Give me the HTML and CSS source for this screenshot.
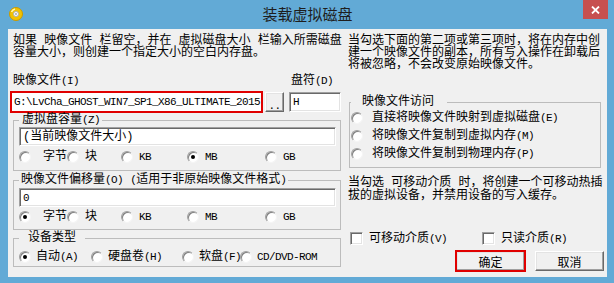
FILE: index.html
```html
<!DOCTYPE html>
<html lang="zh-CN">
<head>
    <meta charset="UTF-8">
    <title>装载虚拟磁盘</title>
    <link rel="stylesheet" href="styles.css">
</head>
<body>
    <div class="window">
        <div class="titlebar">
            <svg class="app-icon" width="14" height="14" viewBox="0 0 14 14">
                <circle cx="7" cy="7" r="6.5" fill="#f2c200" stroke="#c99a00"/>
                <path d="M2.5 5 A5 5 0 0 1 6 2" stroke="#fff6b0" stroke-width="1.5" fill="none"/>
                <circle cx="7" cy="7" r="2.5" fill="#ffffff" stroke="#b0b0b0"/>
                <circle cx="7" cy="7" r="0.9" fill="#9a9a9a"/>
            </svg>
            <div class="title">装载虚拟磁盘</div>
            <div class="close">
                <svg width="9" height="8" viewBox="0 0 9 8">
                    <path d="M1 0.5 L8 7.5 M8 0.5 L1 7.5" stroke="#fff" stroke-width="1.8"/>
                </svg>
            </div>
        </div>

        <div class="client">
            <div class="col-left">
                <p class="note">如果 映像文件 栏留空，并在 虚拟磁盘大小 栏输入所需磁盘<br>容量大小，则创建一个指定大小的空白内存盘。</p>

                <div class="label-row">
                    <div class="file-label">映像文件<span class="en">(I)</span></div>
                    <div class="drive-label">盘符<span class="en">(D)</span></div>
                </div>
                <div class="input-row">
                    <div class="path-box">
                        <div class="field path"><span class="en">G:\LvCha_GHOST_WIN7_SP1_X86_ULTIMATE_2015</span><span class="caret"></span></div>
                    </div>
                    <button class="btn browse"><span class="en">..</span></button>
                    <div class="field drive"><span class="en">H</span></div>
                </div>

                <fieldset class="group size-group">
                    <legend>虚拟盘容量<span class="en">(Z)</span></legend>
                    <div class="field">(当前映像文件大小)</div>
                    <div class="units">
                        <label class="opt wide"><span class="radio"></span><span>字节</span></label>
                        <label class="opt"><span class="radio"></span><span>块</span></label>
                        <label class="opt"><span class="radio"></span><span class="en">KB</span></label>
                        <label class="opt"><span class="radio on"></span><span class="en">MB</span></label>
                        <label class="opt"><span class="radio"></span><span class="en">GB</span></label>
                    </div>
                </fieldset>

                <fieldset class="group offset-group">
                    <legend>映像文件偏移量<span class="en">(O)</span> <span class="en">(</span>适用于非原始映像文件格式<span class="en">)</span></legend>
                    <div class="field"><span class="en">0</span></div>
                    <div class="units">
                        <label class="opt wide"><span class="radio on"></span><span>字节</span></label>
                        <label class="opt"><span class="radio"></span><span>块</span></label>
                        <label class="opt"><span class="radio"></span><span class="en">KB</span></label>
                        <label class="opt"><span class="radio"></span><span class="en">MB</span></label>
                        <label class="opt"><span class="radio"></span><span class="en">GB</span></label>
                    </div>
                </fieldset>

                <fieldset class="group device-group">
                    <legend>设备类型</legend>
                    <div class="devices">
                        <label class="opt"><span class="radio on"></span><span>自动<span class="en">(A)</span></span></label>
                        <label class="opt"><span class="radio"></span><span>硬盘卷<span class="en">(H)</span></span></label>
                        <label class="opt"><span class="radio"></span><span>软盘<span class="en">(F)</span></span></label>
                        <label class="opt"><span class="radio"></span><span class="en">CD/DVD-ROM</span></label>
                    </div>
                </fieldset>
            </div>

            <div class="col-right">
                <p class="note">当勾选下面的第二项或第三项时，将在内存中创<br>建一个映像文件的副本，所有写入操作在卸载后<br>将被忽略，不会改变原始映像文件。</p>

                <fieldset class="group access-group">
                    <legend>映像文件访问</legend>
                    <label class="opt"><span class="radio"></span><span>直接将映像文件映射到虚拟磁盘<span class="en">(E)</span></span></label>
                    <label class="opt"><span class="radio"></span><span>将映像文件复制到虚拟内存<span class="en">(M)</span></span></label>
                    <label class="opt"><span class="radio"></span><span>将映像文件复制到物理内存<span class="en">(P)</span></span></label>
                </fieldset>

                <p class="note note-removable">当勾选 可移动介质 时，将创建一个可移动热插<br>拔的虚拟设备，并禁用设备的写入缓存。</p>

                <div class="checks">
                    <label class="opt"><span class="checkbox"></span><span>可移动介质<span class="en">(V)</span></span></label>
                    <label class="opt"><span class="checkbox"></span><span>只读介质<span class="en">(R)</span></span></label>
                </div>

                <div class="buttons">
                    <button class="btn action marked">确定</button>
                    <button class="btn action">取消</button>
                </div>
            </div>
        </div>
    </div>
</body>
</html>
```

FILE: styles.css
```css
* {
    margin: 0;
    padding: 0;
    box-sizing: border-box;
}

body {
    font-family: "Liberation Mono", "Noto Sans CJK SC", monospace;
    font-size: 12px;
    line-height: 12px;
    color: #000;
    background: #62aad6;
}

.en {
    font-family: "Liberation Mono", monospace;
    font-size: 11px;
    letter-spacing: -0.6px;
}

/* Window frame */
.window {
    width: 614px;
    height: 283px;
    background: #62aad6;
    padding: 0 7px 6px 8px;
    display: flex;
    flex-direction: column;
}

.titlebar {
    height: 29px;
    display: grid;
    grid-template-columns: 1fr auto 1fr;
    align-items: start;
}

.app-icon {
    margin: 7px 0 0 1px;
}

.title {
    font-family: "Noto Sans CJK SC", sans-serif;
    font-size: 15px;
    line-height: 15px;
    color: #1e1e1e;
    margin-top: 6px;
}

.close {
    justify-self: end;
    margin-right: -1px;
    width: 25px;
    height: 19px;
    background: #c75050;
    display: flex;
    align-items: center;
    justify-content: center;
}

.client {
    flex: 1;
    background: #f0f0f0;
    display: flex;
    gap: 7px;
    padding: 6px 3px 0 5px;
    white-space: nowrap;
}

.col-left {
    width: 328px;
    display: flex;
    flex-direction: column;
}

.col-right {
    width: 256px;
    display: flex;
    flex-direction: column;
}

/* Labels and fields */
.label-row {
    display: flex;
    margin-top: 16px;
}

.file-label {
    width: 278px;
}

.input-row {
    display: flex;
    align-items: center;
    height: 22px;
    margin: 4px 0 0 -3px;
}

.path-box {
    width: 253px;
    height: 22px;
    border: 2px solid #e00000;
}

.field {
    height: 19px;
    background: #fff;
    border: 1px solid;
    border-color: #a0a0a0 #fff #fff #a0a0a0;
    box-shadow: inset 1px 1px 0 #696969, inset -1px -1px 0 #e3e3e3;
    padding: 0 3px;
    display: flex;
    align-items: center;
    overflow: hidden;
}

.field.path {
    height: 18px;
    border: none;
    box-shadow: none;
    padding-left: 2px;
}

.caret {
    width: 1px;
    height: 13px;
    background: #000;
    margin-left: 1px;
}

.field.drive {
    width: 52px;
    height: 20px;
    margin-left: 5px;
}

.btn {
    font-family: "Noto Sans CJK SC", sans-serif;
    font-size: 12px;
    color: #000;
    background: #f0f0f0;
    border: 1px solid;
    border-color: #fff #696969 #696969 #fff;
    box-shadow: inset -1px -1px 0 #a0a0a0, inset 1px 1px 0 #e3e3e3;
}

.browse {
    width: 19px;
    height: 20px;
    margin-left: 2px;
    line-height: 22px;
}

/* Group boxes */
.group {
    border: 1px solid #bcbcbc;
    padding: 0 4px 0 5px;
    min-width: 0;
}

.group legend {
    padding: 0 2px 0 3px;
    line-height: 12px;
}

.size-group {
    margin-top: 1px;
    padding-top: 1px;
    padding-bottom: 7px;
}

.offset-group {
    margin-top: 3px;
    padding-top: 2px;
    padding-bottom: 6px;
}

.offset-group legend {
    padding: 0 2px 0 2px;
}

.device-group {
    margin-top: 2px;
    padding-top: 7px;
    padding-bottom: 3px;
}

.device-group legend {
    padding: 0 9px 0 9px;
}

.units {
    display: grid;
    grid-template-columns: 48px 54px 66px 78px auto;
    height: 12px;
    margin-top: 5px;
}

.offset-group .units {
    margin-top: 4px;
}

.devices {
    display: grid;
    grid-template-columns: 72px 91px 58px auto;
    height: 12px;
}

.opt {
    display: flex;
    align-items: center;
    gap: 6px;
    height: 12px;
}

.opt.wide {
    gap: 12px;
}

.devices .opt {
    gap: 5px;
}

.radio {
    position: relative;
    flex: none;
    width: 12px;
    height: 12px;
    border-radius: 50%;
    background: #fff;
    border: 1px solid;
    border-color: #a0a0a0 #f4f4f4 #f4f4f4 #a0a0a0;
    box-shadow: inset 1px 1px 0 #808080;
}

.radio.on::after {
    content: '';
    position: absolute;
    left: 3px;
    top: 3px;
    width: 4px;
    height: 4px;
    border-radius: 50%;
    background: #000;
}

.checkbox {
    flex: none;
    width: 13px;
    height: 13px;
    background: #fff;
    border: 1px solid;
    border-color: #a0a0a0 #fff #fff #a0a0a0;
    box-shadow: inset 1px 1px 0 #696969, inset -1px -1px 0 #e3e3e3;
}

/* Right column */
.access-group {
    margin: 25px 3px 0 1px;
    padding: 1px 0 4px 1px;
}

.access-group legend {
    padding: 0 13px 0 11px;
}

.access-group .opt {
    height: 18px;
    gap: 9px;
}

.note-removable {
    margin-top: 9px;
    line-height: 13px;
}

.checks {
    display: grid;
    grid-template-columns: 132px auto;
    margin: 29px 0 0 2px;
}

.checks .opt {
    height: 13px;
}

.buttons {
    display: flex;
    justify-content: flex-end;
    gap: 10px;
    margin-top: 6px;
}

.action {
    width: 69px;
    height: 20px;
}

.marked {
    outline: 2px solid #e00000;
    outline-offset: -1px;
}
```
